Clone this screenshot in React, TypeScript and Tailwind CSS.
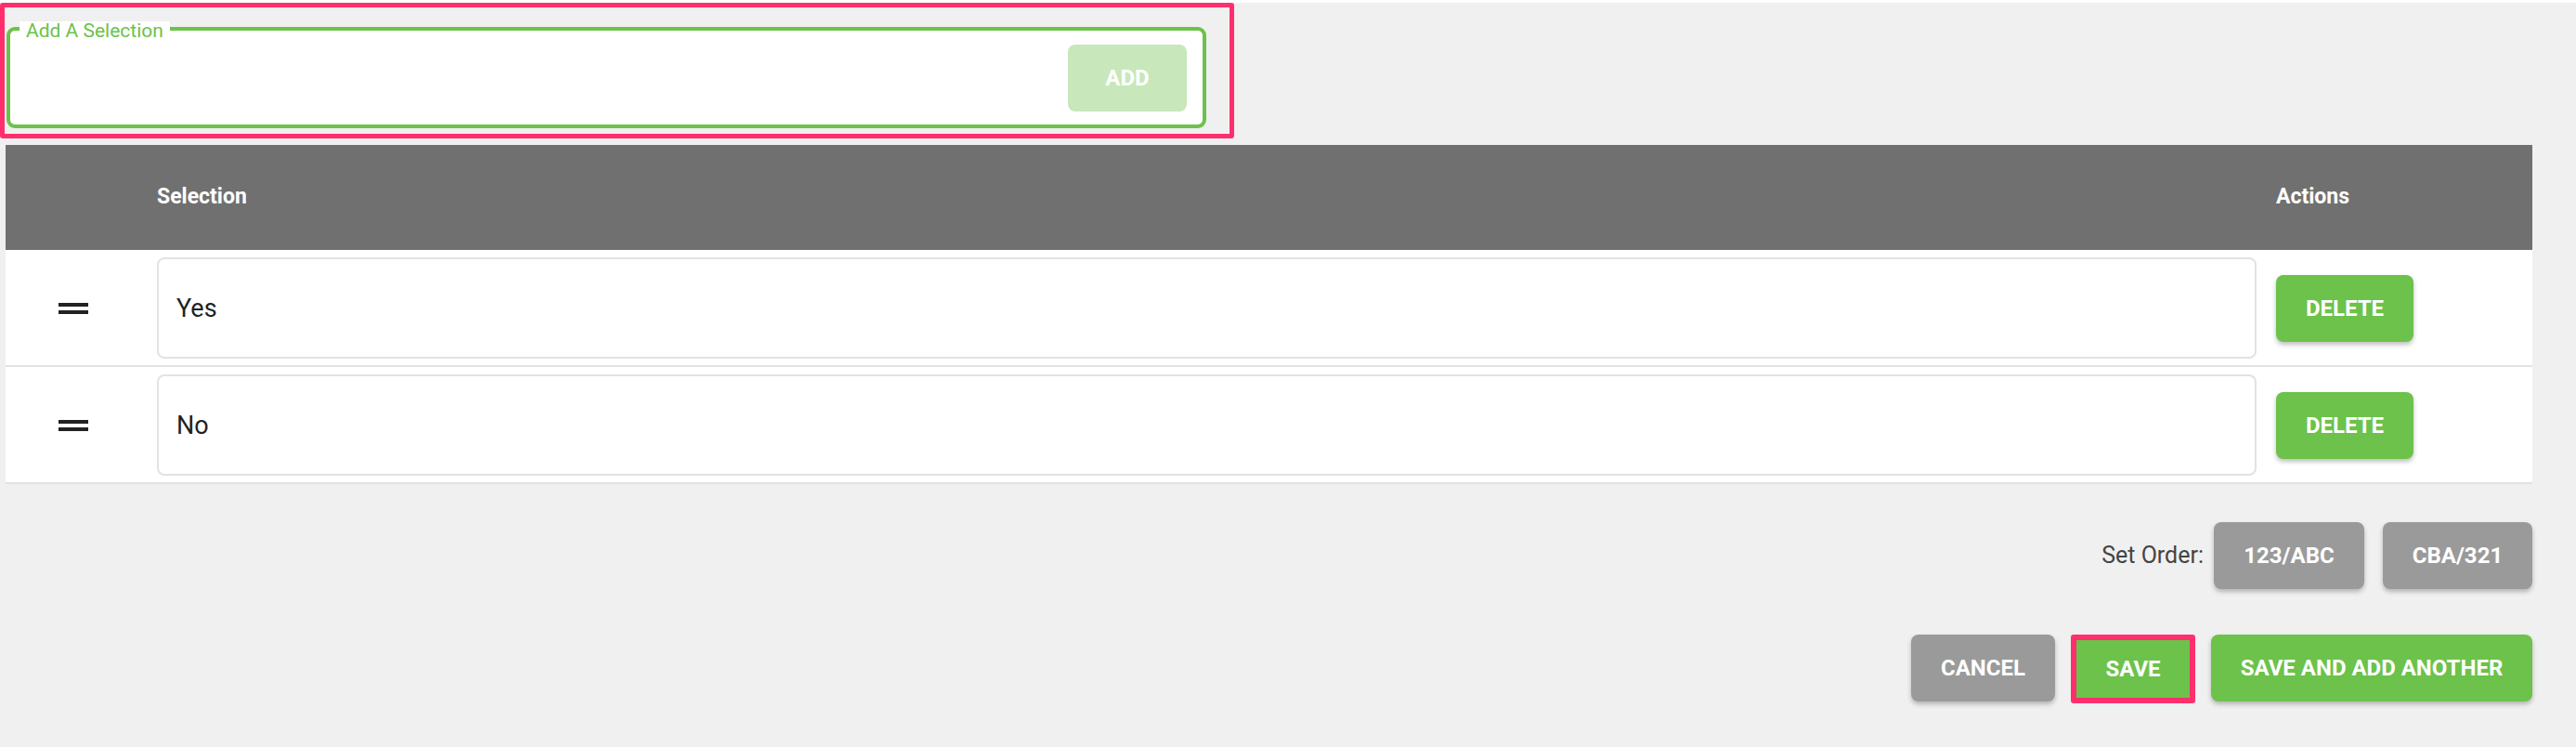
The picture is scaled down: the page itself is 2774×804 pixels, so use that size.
import { useState } from 'react'

type Choice = { id: number; label: string }

const initial: Choice[] = [
  { id: 1, label: 'Yes' },
  { id: 2, label: 'No' },
]

function DragHandle() {
  return (
    <div className="flex w-[32px] flex-col gap-[4px]">
      <span className="block h-[4px] w-full bg-[#222222]" />
      <span className="block h-[4px] w-full bg-[#222222]" />
    </div>
  )
}

function App() {
  const [choices, setChoices] = useState<Choice[]>(initial)
  const [draft, setDraft] = useState('')

  const remove = (id: number) => setChoices(choices.filter((c) => c.id !== id))

  return (
    <div className="min-h-screen w-full bg-[#f0f0f0] font-['Roboto','Liberation_Sans',sans-serif] text-[#222222]">
      {/* add selection (highlighted) */}
      <div className="mt-[3px] h-[146px] w-[1329px] rounded-[3px] border-[5px] border-[#ff2f6e] pl-[2px] pt-[21px]">
        <div className="relative flex h-[109px] w-[1292px] items-center justify-end rounded-[9px] border-4 border-[#6cc24a] bg-white pr-[17px]">
          <span className="absolute left-[10px] top-[-10px] bg-white px-[7px] text-[21px] leading-[21px] text-[#6cc24a]">
            Add A Selection
          </span>
          <input
            value={draft}
            onChange={(e) => setDraft(e.target.value)}
            className="mr-[12px] h-full flex-1 bg-transparent pl-[20px] text-[27px] outline-none"
          />
          <button
            disabled
            className="h-[72px] w-[128px] rounded-[8px] bg-[#c8e7bb] text-[24px] font-bold text-white"
          >
            ADD
          </button>
        </div>
      </div>

      <div className="ml-[6px] w-[2721px]">
        {/* table */}
        <div className="mt-[7px]">
          <div className="grid h-[113px] grid-cols-[163px_1fr_276px] items-center bg-[#707070] text-[23px] font-bold text-white">
            <div />
            <div>Selection</div>
            <div>Actions</div>
          </div>
          {choices.map((c) => (
            <div
              key={c.id}
              className="grid grid-cols-[163px_1fr_276px] items-center border-b-2 border-[#e2e2e2] bg-white pt-[8px] pb-[7px]"
            >
              <div className="pl-[57px]">
                <DragHandle />
              </div>
              <div className="pr-[21px]">
                <div className="flex h-[109px] items-center rounded-[8px] border-2 border-[#e2e2e2] px-[19px] pt-[2px] text-[27px]">
                  {c.label}
                </div>
              </div>
              <div>
                <button
                  onClick={() => remove(c.id)}
                  className="h-[72px] w-[148px] rounded-[8px] bg-[#6cc24a] text-[24px] font-bold text-white shadow-[0_3px_5px_rgba(0,0,0,0.25)]"
                >
                  DELETE
                </button>
              </div>
            </div>
          ))}
        </div>

        {/* order */}
        <div className="mt-[41px] flex items-center justify-end gap-[20px]">
          <span className="mr-[-9px] text-[25px] text-[#444444]">Set Order:</span>
          <button className="h-[72px] w-[162px] rounded-[8px] bg-[#9a9a9a] text-[24px] font-bold text-white shadow-[0_3px_5px_rgba(0,0,0,0.25)]">
            123/ABC
          </button>
          <button className="h-[72px] w-[161px] rounded-[8px] bg-[#9a9a9a] text-[24px] font-bold text-white shadow-[0_3px_5px_rgba(0,0,0,0.25)]">
            CBA/321
          </button>
        </div>

        {/* footer */}
        <div className="mt-[49px] flex items-start justify-end gap-[17px]">
          <button className="h-[72px] w-[155px] rounded-[8px] bg-[#9a9a9a] text-[24px] font-bold text-white shadow-[0_3px_5px_rgba(0,0,0,0.25)]">
            CANCEL
          </button>
          <button className="h-[74px] w-[134px] rounded-[3px] border-[6px] border-[#ff2f6e] bg-[#6cc24a] text-[24px] font-bold text-white">
            SAVE
          </button>
          <button className="h-[72px] w-[346px] rounded-[8px] bg-[#6cc24a] text-[24px] font-bold text-white shadow-[0_3px_5px_rgba(0,0,0,0.25)]">
            SAVE AND ADD ANOTHER
          </button>
        </div>
      </div>
    </div>
  )
}

export default App
